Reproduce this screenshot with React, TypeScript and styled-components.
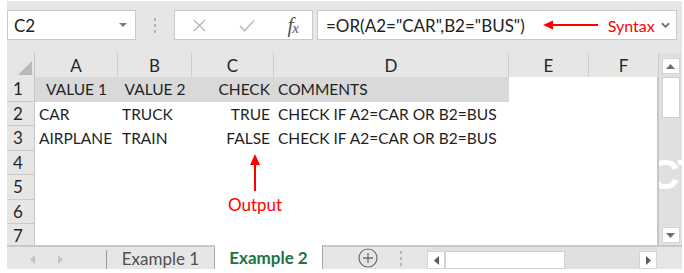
import React from 'react';
import styled, { createGlobalStyle } from 'styled-components';

const GlobalStyle = createGlobalStyle`
  html, body {
    margin: 0;
    padding: 0;
    background: #ffffff;
  }
  body {
    font-family: Lato, "Open Sans", "Liberation Sans", sans-serif;
  }
`;

const COLS = [28, 83, 74, 82, 235, 80, 70];
const LETTERS = ['A', 'B', 'C', 'D', 'E', 'F'];

type Align = 'left' | 'center' | 'right';

interface CellData {
  text: string;
  align?: Align;
}

const rows: CellData[][] = [
  [
    { text: 'VALUE 1', align: 'center' },
    { text: 'VALUE 2', align: 'center' },
    { text: 'CHECK', align: 'right' },
    { text: 'COMMENTS' },
  ],
  [
    { text: 'CAR' },
    { text: 'TRUCK' },
    { text: 'TRUE', align: 'right' },
    { text: 'CHECK IF A2=CAR OR B2=BUS' },
  ],
  [
    { text: 'AIRPLANE' },
    { text: 'TRAIN' },
    { text: 'FALSE', align: 'right' },
    { text: 'CHECK IF A2=CAR OR B2=BUS' },
  ],
  [],
  [],
  [],
  [],
];

const App: React.FC = () => {
  return (
    <>
      <GlobalStyle />
      <Window>
        <FormulaRow>
          <NameBox>
            <NameText>C2</NameText>
            <SmallTriangle />
          </NameBox>
          <Grip>
            <GripDot />
            <GripDot />
            <GripDot />
          </Grip>
          <FuncBox>
            <svg width="13" height="13" viewBox="0 0 14 14">
              <path d="M1 1 L13 13 M13 1 L1 13" stroke="#b4b4b4" strokeWidth="1.4" fill="none" />
            </svg>
            <svg width="16" height="13" viewBox="0 0 17 13">
              <path d="M1 7 L6 12 L16 1" stroke="#b4b4b4" strokeWidth="1.4" fill="none" />
            </svg>
            <FxLabel>
              f<sub>x</sub>
            </FxLabel>
          </FuncBox>
          <FormulaInput>
            <FormulaText>=OR(A2="CAR",B2="BUS")</FormulaText>
            <svg width="55" height="10" viewBox="0 0 55 10">
              <path d="M0 5 L10 0.5 L10 9.5 Z" fill="#ff0000" />
              <path d="M8 5 L55 5" stroke="#ff0000" strokeWidth="2" />
            </svg>
            <SyntaxNote>Syntax</SyntaxNote>
            <Chevron viewBox="0 0 10 7">
              <path d="M1 1 L5 5 L9 1" stroke="#6d6d6d" strokeWidth="2" fill="none" />
            </Chevron>
          </FormulaInput>
        </FormulaRow>

        <SheetArea>
          <Sheet>
            <Grid>
              <Corner>
                <svg width="14" height="14" viewBox="0 0 14 14">
                  <path d="M14 0 L14 14 L0 14 Z" fill="#b9b9b9" />
                </svg>
              </Corner>
              {LETTERS.map((l) => (
                <ColHead key={l}>{l}</ColHead>
              ))}
              {rows.map((r, i) => (
                <React.Fragment key={i}>
                  <RowHead>{i + 1}</RowHead>
                  {LETTERS.map((l, j) => {
                    const cell = r[j];
                    return (
                      <Cell key={l} $align={cell?.align ?? 'left'} $shade={i === 0 && j < 4}>
                        {cell?.text ?? ''}
                      </Cell>
                    );
                  })}
                </React.Fragment>
              ))}
            </Grid>
            <OutputNote>
              <svg width="12" height="37" viewBox="0 0 12 37">
                <path d="M6 0 L11 11 L1 11 Z" fill="#ff0000" />
                <path d="M6 9 L6 37" stroke="#ff0000" strokeWidth="2" />
              </svg>
              <RedNote>Output</RedNote>
            </OutputNote>
          </Sheet>
          <VScroll>
            <ScrollButton>
              <svg width="9" height="5" viewBox="0 0 9 5">
                <path d="M0 5 L4.5 0 L9 5 Z" fill="#6d6d6d" />
              </svg>
            </ScrollButton>
            <VThumb />
            <Track />
            <ScrollButton>
              <svg width="9" height="5" viewBox="0 0 9 5">
                <path d="M0 0 L4.5 5 L9 0 Z" fill="#6d6d6d" />
              </svg>
            </ScrollButton>
            <Watermark>CT</Watermark>
          </VScroll>
        </SheetArea>

        <TabBar>
          <NavArea>
            <svg width="5" height="9" viewBox="0 0 5 9">
              <path d="M5 0 L0 4.5 L5 9 Z" fill="#c4c4c4" />
            </svg>
            <svg width="5" height="9" viewBox="0 0 5 9">
              <path d="M0 0 L5 4.5 L0 9 Z" fill="#c4c4c4" />
            </svg>
          </NavArea>
          <SheetTab>Example 1</SheetTab>
          <SheetTab $active>Example 2</SheetTab>
          <AddArea>
            <svg width="20" height="20" viewBox="0 0 20 20">
              <circle cx="10" cy="10" r="9" stroke="#6d6d6d" strokeWidth="1.2" fill="none" />
              <path d="M10 5 L10 15 M5 10 L15 10" stroke="#6d6d6d" strokeWidth="1.3" />
            </svg>
            <Grip>
              <GripDot />
              <GripDot />
              <GripDot />
            </Grip>
          </AddArea>
          <HScroll>
            <HButton>
              <svg width="5" height="9" viewBox="0 0 5 9">
                <path d="M5 0 L0 4.5 L5 9 Z" fill="#5a5a5a" />
              </svg>
            </HButton>
            <HThumb />
            <Track />
            <HButton>
              <svg width="5" height="9" viewBox="0 0 5 9">
                <path d="M0 0 L5 4.5 L0 9 Z" fill="#5a5a5a" />
              </svg>
            </HButton>
          </HScroll>
        </TabBar>
      </Window>
    </>
  );
};

const Window = styled.div`
  margin: 1px 0 0 7px;
  width: 675px;
  height: 268px;
  background: #e6e6e6;
  display: flex;
  flex-direction: column;
  overflow: hidden;
`;

const FormulaRow = styled.div`
  height: 52px;
  flex: none;
  display: flex;
  align-items: flex-start;
  padding-top: 9px;
  box-sizing: border-box;
`;

const Box = styled.div`
  height: 30px;
  box-sizing: border-box;
  background: #ffffff;
  border: 1px solid #c9c9c9;
  display: flex;
  align-items: center;
`;

const NameBox = styled(Box)`
  width: 129px;
  padding: 0 8px 0 6px;
  justify-content: space-between;
`;

const NameText = styled.span`
  font-size: 17px;
  color: #222222;
`;

const SmallTriangle = styled.span`
  width: 0;
  height: 0;
  border-left: 4px solid transparent;
  border-right: 4px solid transparent;
  border-top: 4px solid #7a7a7a;
`;

const Grip = styled.div`
  width: 38px;
  height: 30px;
  display: flex;
  flex-direction: column;
  align-items: center;
  justify-content: center;
  gap: 3px;
`;

const GripDot = styled.span`
  width: 2px;
  height: 3px;
  background: #b4b4b4;
`;

const FuncBox = styled(Box)`
  width: 139px;
  padding: 0 14px 0 18px;
  justify-content: space-between;
`;

const FxLabel = styled.span`
  font-family: "Liberation Serif", serif;
  font-style: italic;
  font-size: 21px;
  color: #555555;
  letter-spacing: -1px;
  sub {
    font-size: 15px;
    vertical-align: -1px;
  }
`;

const FormulaInput = styled(Box)`
  margin-left: 4px;
  width: 360px;
  padding: 0 6px 0 8px;
`;

const FormulaText = styled.span`
  font-size: 17px;
  color: #222222;
  margin-right: 18px;
  white-space: nowrap;
`;

const RedNote = styled.span`
  font-size: 17px;
  color: #ff0000;
  white-space: nowrap;
`;

const SyntaxNote = styled(RedNote)`
  font-size: 16px;
  margin-left: 10px;
`;

const Chevron = styled.svg`
  width: 9px;
  height: 7px;
  margin-left: auto;
`;

const SheetArea = styled.div`
  height: 192px;
  flex: none;
  display: flex;
`;

const Sheet = styled.div`
  position: relative;
  width: 652px;
  height: 192px;
  overflow: hidden;
`;

const Grid = styled.div`
  display: grid;
  grid-template-columns: ${COLS.map((c) => `${c}px`).join(' ')};
  grid-template-rows: 24px;
  grid-auto-rows: 24.5px;
`;

const Corner = styled.div`
  background: #e6e6e6;
  border-right: 1px solid #c6c6c6;
  display: flex;
  align-items: flex-end;
  justify-content: flex-end;
  padding: 0 2px 2px 0;
`;

const ColHead = styled.div`
  background: #e6e6e6;
  border-right: 1px solid #cdcdcd;
  font-size: 17px;
  color: #262626;
  display: flex;
  align-items: center;
  justify-content: center;
  &:last-of-type {
    border-right: none;
  }
`;

const RowHead = styled.div`
  background: #e6e6e6;
  border-right: 1px solid #c6c6c6;
  border-bottom: 1px solid #cbcbcb;
  font-size: 17px;
  color: #262626;
  display: flex;
  align-items: center;
  padding-left: 6px;
`;

const Cell = styled.div<{ $align: Align; $shade?: boolean }>`
  background: ${(p) => (p.$shade ? '#d9d9d9' : '#ffffff')};
  font-size: 15.5px;
  color: #1f1f1f;
  white-space: nowrap;
  display: flex;
  align-items: center;
  justify-content: ${(p) =>
    p.$align === 'center' ? 'center' : p.$align === 'right' ? 'flex-end' : 'flex-start'};
  padding: 0 4px;
  overflow: visible;
  &:nth-child(7n) {
    border-right: 2px solid #c6c6c6;
  }
`;

const OutputNote = styled.div`
  position: absolute;
  left: 211px;
  top: 101px;
  width: 74px;
  display: flex;
  flex-direction: column;
  align-items: center;
  gap: 3px;
`;

const VScroll = styled.div`
  position: relative;
  width: 23px;
  display: flex;
  flex-direction: column;
  align-items: center;
  padding: 5px 0 2px;
  box-sizing: border-box;
  background: #e0e0e0;
  overflow: hidden;
`;

const ScrollButton = styled.div`
  width: 18px;
  height: 16px;
  flex: none;
  background: #ffffff;
  border: 1px solid #d4d4d4;
  box-sizing: border-box;
  display: flex;
  align-items: center;
  justify-content: center;
`;

const VThumb = styled.div`
  width: 18px;
  height: 41px;
  flex: none;
  margin-top: 3px;
  background: #ffffff;
  border: 1px solid #cfcfcf;
  box-sizing: border-box;
`;

const Track = styled.div`
  flex: 1;
`;

const Watermark = styled.span`
  position: absolute;
  left: -10px;
  top: 98px;
  font-family: "Liberation Sans", sans-serif;
  font-weight: bold;
  font-size: 42px;
  color: #ffffff;
  letter-spacing: -2px;
`;

const TabBar = styled.div`
  flex: 1;
  display: flex;
  border-top: 2px solid #c8c8c8;
  background: #e6e6e6;
`;

const NavArea = styled.div`
  width: 100px;
  display: flex;
  align-items: center;
  gap: 23px;
  padding-left: 23px;
  box-sizing: border-box;
  border-right: 1px solid #9a9a9a;
  margin: 3px 0 0;
`;

const SheetTab = styled.div<{ $active?: boolean }>`
  width: 108px;
  box-sizing: border-box;
  display: flex;
  align-items: center;
  justify-content: center;
  font-size: 17px;
  font-weight: ${(p) => (p.$active ? 700 : 400)};
  color: ${(p) => (p.$active ? '#217346' : '#505050')};
  background: ${(p) => (p.$active ? '#ffffff' : 'transparent')};
  border-right: 1px solid #a8a8a8;
  margin-top: ${(p) => (p.$active ? '-2px' : '0')};
`;

const AddArea = styled.div`
  width: 104px;
  display: flex;
  align-items: center;
  padding-left: 35px;
  box-sizing: border-box;
  gap: 3px;
  & > div {
    height: 22px;
    width: 40px;
  }
`;

const HScroll = styled.div`
  width: 230px;
  display: flex;
  align-items: stretch;
  padding-top: 4px;
  box-sizing: border-box;
  background: #e0e0e0;
`;

const HButton = styled.div`
  width: 18px;
  flex: none;
  background: #ffffff;
  border: 1px solid #d4d4d4;
  box-sizing: border-box;
  display: flex;
  align-items: center;
  justify-content: center;
`;

const HThumb = styled.div`
  width: 120px;
  flex: none;
  background: #ffffff;
  border: 1px solid #cfcfcf;
  box-sizing: border-box;
`;

export default App;
